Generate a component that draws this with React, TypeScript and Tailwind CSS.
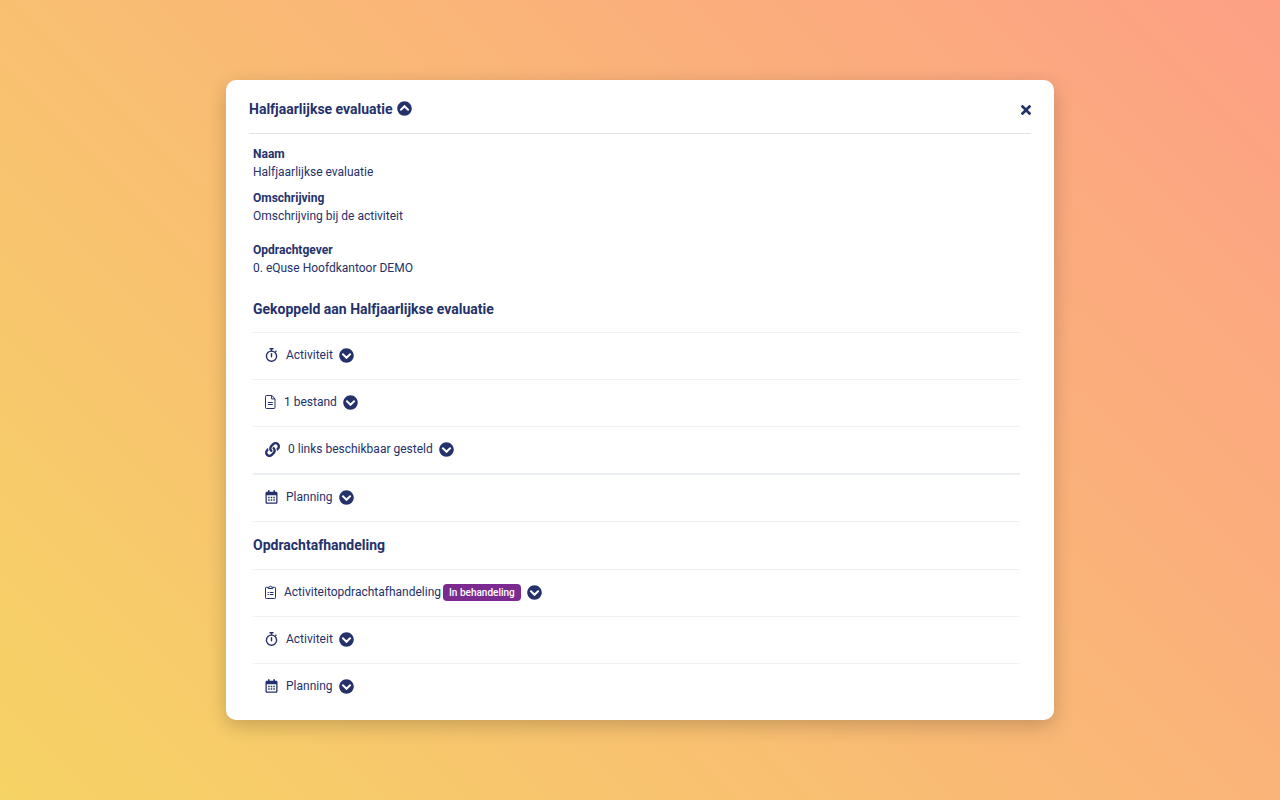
import React, { useState } from "react";
import {
  FaChevronCircleDown,
  FaChevronCircleUp,
  FaLink,
  FaTimes,
} from "react-icons/fa";

type IconName = "stopwatch" | "file" | "link" | "calendar" | "clipboard";

interface RowItem {
  id: string;
  icon: IconName;
  label: string;
  badge?: string;
  thick?: boolean;
}

const linkedItems: RowItem[] = [
  { id: "l-activiteit", icon: "stopwatch", label: "Activiteit" },
  { id: "l-bestand", icon: "file", label: "1 bestand" },
  { id: "l-links", icon: "link", label: "0 links beschikbaar gesteld" },
  { id: "l-planning", icon: "calendar", label: "Planning", thick: true },
];

const handlingItems: RowItem[] = [
  {
    id: "h-afhandeling",
    icon: "clipboard",
    label: "Activiteitopdrachtafhandeling",
    badge: "In behandeling",
  },
  { id: "h-activiteit", icon: "stopwatch", label: "Activiteit" },
  { id: "h-planning", icon: "calendar", label: "Planning" },
];

const RowIcon = ({ name }: { name: IconName }) => {
  switch (name) {
    case "stopwatch":
      return (
        <svg viewBox="0 0 12 14" className="w-[13px] h-3.5" fill="none" stroke="currentColor" aria-hidden="true">
          <circle cx="6" cy="8.2" r="5.1" strokeWidth="1.4" />
          <path d="M4 .7h4M6 .7v2.5M9.9 3.7l1-1" strokeWidth="1.4" />
          <path d="M6 5.6v3.2" strokeWidth="1.4" strokeLinecap="round" />
        </svg>
      );
    case "file":
      return (
        <svg viewBox="0 0 11 14" className="w-[11px] h-3.5" fill="none" stroke="currentColor" aria-hidden="true">
          <path d="M1.4.5h5.4l3.2 3.2v8.9a.9.9 0 0 1-.9.9H1.4a.9.9 0 0 1-.9-.9V1.4a.9.9 0 0 1 .9-.9z" />
          <path d="M6.6.5v3.4H10" />
          <path d="M2.8 7.5h5M2.8 9.5h5" strokeWidth="1.2" />
        </svg>
      );
    case "link":
      return <FaLink className="size-[15px]" aria-hidden="true" />;
    case "calendar":
      return (
        <svg viewBox="0 0 12 14" className="w-[13px] h-3.5" fill="currentColor" aria-hidden="true">
          <path
            fillRule="evenodd"
            d="M2.5.3h1.6v1.5h3.8V.3h1.6v1.5h1.2c.7 0 1.3.6 1.3 1.3v9.4c0 .7-.6 1.3-1.3 1.3H1.3C.6 13.8 0 13.2 0 12.5V3.1c0-.7.6-1.3 1.3-1.3h1.2zM1.3 5.2v7.3h9.4V5.2z"
          />
          <path d="M2.7 6.7h1.5v1.5H2.7zM5.25 6.7h1.5v1.5h-1.5zM7.8 6.7h1.5v1.5H7.8zM2.7 9.2h1.5v1.5H2.7zM5.25 9.2h1.5v1.5h-1.5zM7.8 9.2h1.5v1.5H7.8z" />
        </svg>
      );
    case "clipboard":
      return (
        <svg viewBox="0 0 11 14" className="w-[11px] h-3.5" fill="none" stroke="currentColor" aria-hidden="true">
          <path d="M3 2.3H1.3a.8.8 0 0 0-.8.8v9.6a.8.8 0 0 0 .8.8h8.4a.8.8 0 0 0 .8-.8V3.1a.8.8 0 0 0-.8-.8H8" />
          <path d="M3.2 3.5V2.2h1.2a1.1 1.1 0 0 1 2.2 0h1.2v1.3z" />
          <path d="M2.6 7.5h1.2M4.7 7.5h3.8M2.6 9.5h1.2M4.7 9.5h3.8" />
        </svg>
      );
  }
};

const Field = ({ label, value }: { label: string; value: string }) => (
  <div>
    <dt className="font-bold">{label}</dt>
    <dd>{value}</dd>
  </div>
);

const Row = ({ item }: { item: RowItem }) => {
  const [open, setOpen] = useState(false);
  const Chevron = open ? FaChevronCircleUp : FaChevronCircleDown;

  return (
    <li className={item.thick ? "border-t-2 border-[#ebeff3]" : "border-t border-[#eef2f5]"}>
      <button
        type="button"
        aria-expanded={open}
        onClick={() => setOpen(!open)}
        className="flex items-center w-full h-[46px] pl-3 pb-0.5 text-left cursor-pointer"
      >
        <span className="mr-2">
          <RowIcon name={item.icon} />
        </span>
        <span>{item.label}</span>
        {item.badge && (
          <span className="ml-0.5 px-1.5 rounded bg-[#7b2a90] text-white text-[10px] leading-[17px] font-medium">
            {item.badge}
          </span>
        )}
        <Chevron className="size-[15px] ml-1.5" aria-hidden="true" />
      </button>
    </li>
  );
};

export default function App() {
  const [expanded, setExpanded] = useState(true);
  const [visible, setVisible] = useState(true);

  return (
    <main className="flex flex-col items-center justify-center min-h-screen bg-[linear-gradient(45deg,#f6d365_0%,#fda085_100%)] font-[Roboto,sans-serif] text-xs leading-[18px] text-[#24316b]">
      {visible && (
        <section className="w-full max-w-[828px] px-[23px] pb-2.5 bg-white rounded-[10px] shadow-[0_6px_20px_rgba(0,0,0,0.2)]">
          <header className="flex items-center justify-between h-[54px] pt-1 border-b border-[#e2e3e5]">
            <h1 className="text-sm font-bold">
              <button
                type="button"
                aria-expanded={expanded}
                onClick={() => setExpanded(!expanded)}
                className="flex items-center gap-1 cursor-pointer"
              >
                Halfjaarlijkse evaluatie
                {expanded ? (
                  <FaChevronCircleUp className="size-[15px]" aria-hidden="true" />
                ) : (
                  <FaChevronCircleDown className="size-[15px]" aria-hidden="true" />
                )}
              </button>
            </h1>
            <button
              type="button"
              aria-label="Sluiten"
              onClick={() => setVisible(false)}
              className="pt-0.5 cursor-pointer"
            >
              <FaTimes className="w-2.5 h-4" aria-hidden="true" />
            </button>
          </header>

          {expanded && (
            <div className="pl-1 pr-[11px] pt-[11px]">
              <dl>
                <Field label="Naam" value="Halfjaarlijkse evaluatie" />
                <div className="mt-2 mb-4">
                  <Field label="Omschrijving" value="Omschrijving bij de activiteit" />
                </div>
                <Field label="Opdrachtgever" value="0. eQuse Hoofdkantoor DEMO" />
              </dl>

              <h2 className="mt-5 mb-[11px] text-sm leading-6 font-bold">
                Gekoppeld aan Halfjaarlijkse evaluatie
              </h2>
              <ul className="border-b border-[#eef2f5]">
                {linkedItems.map((item) => (
                  <Row key={item.id} item={item} />
                ))}
              </ul>

              <h2 className="mt-[11px] mb-3 text-sm leading-6 font-bold">
                Opdrachtafhandeling
              </h2>
              <ul>
                {handlingItems.map((item) => (
                  <Row key={item.id} item={item} />
                ))}
              </ul>
            </div>
          )}
        </section>
      )}
    </main>
  );
}
